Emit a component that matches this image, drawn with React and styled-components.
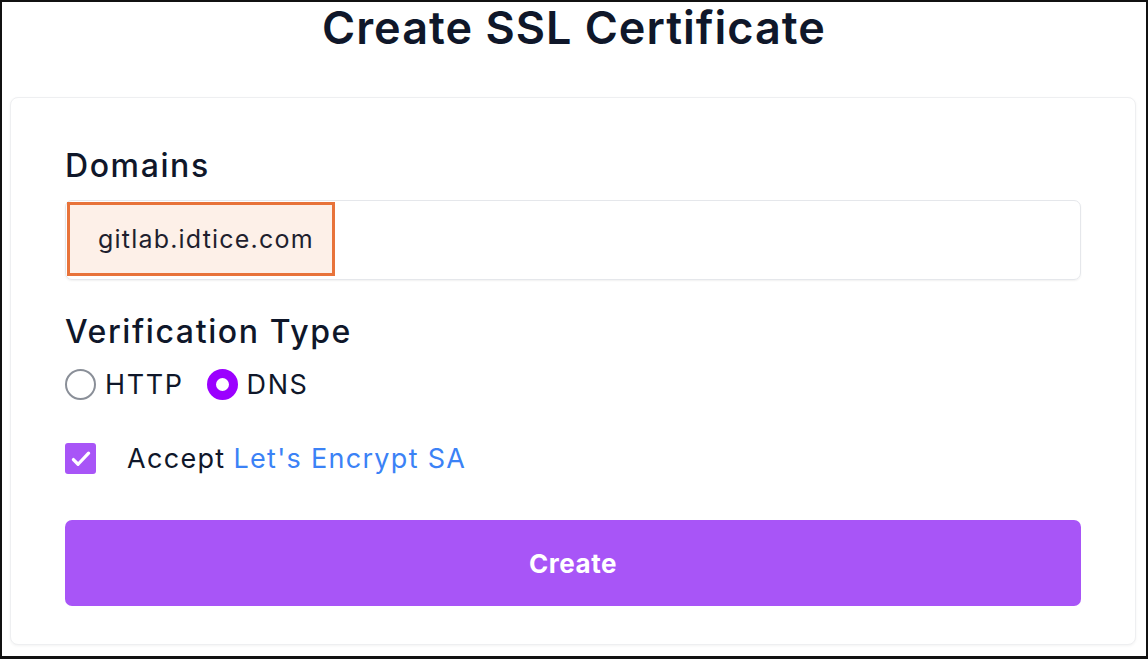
import React from 'react';
import styled, { createGlobalStyle } from 'styled-components';

const GlobalStyle = createGlobalStyle`
	* { box-sizing: border-box; }
	body {
		margin: 0;
		font-family: Inter, "Noto Sans", sans-serif;
		background: #fff;
	}
`;

const Frame = styled.div`
	width: 1148px;
	height: 659px;
	border: 2px solid #111;
	border-bottom-width: 3px;
	background: #fff;
	display: flex;
	flex-direction: column;
	overflow: hidden;
`;

const Title = styled.h1`
	margin: 0;
	height: 95px;
	text-align: center;
	font-size: 45px;
	font-weight: 600;
	letter-spacing: 1px;
	line-height: 52px;
	color: #0f172a;
`;

const Card = styled.div`
	margin: 0 10px 11px 8px;
	flex: 1;
	background: #fff;
	border: 1px solid #eeeff1;
	border-radius: 8px;
	box-shadow: 0 1px 3px rgba(0, 0, 0, 0.05);
	padding: 48px 54px 0;
	display: flex;
	flex-direction: column;
`;

const Label = styled.div`
	font-size: 32px;
	font-weight: 500;
	letter-spacing: 1.6px;
	line-height: 40px;
	color: #0f172a;
`;

const InputBox = styled.div`
	margin-top: 14px;
	height: 80px;
	border: 1px solid #e5e7eb;
	border-radius: 7px;
	box-shadow: 0 1px 2px rgba(0, 0, 0, 0.06);
	padding: 1px;
	display: flex;
	align-items: flex-start;
`;

const Highlight = styled.div`
	width: 268px;
	height: 74px;
	border: 3px solid #e8733a;
	background: #fdf0e8;
	display: flex;
	align-items: center;
	padding-left: 28px;
	font-size: 25px;
	letter-spacing: 1.2px;
	color: #1f1f2e;
`;

const Section = styled.div`
	margin-top: 32px;
`;

const RadioRow = styled.div`
	display: flex;
	align-items: center;
	margin-top: 16px;
`;

const RadioOption = styled.label`
	display: flex;
	align-items: center;
	gap: 9px;
	margin-right: 23px;
	font-size: 27px;
	letter-spacing: 1.6px;
	color: #0f172a;
`;

const RadioDot = styled.span`
	width: 31px;
	height: 31px;
	border-radius: 50%;
	border: ${p => (p.$checked ? '9px solid #9b00ff' : '2px solid #8a8f98')};
	background: #fff;
	display: inline-block;
`;

const CheckRow = styled.div`
	display: flex;
	align-items: center;
	margin-top: 41px;
	font-size: 27px;
	letter-spacing: 1.3px;
	color: #0f172a;
`;

const CheckBox = styled.span`
	width: 31px;
	height: 31px;
	border-radius: 3px;
	background: #a855f7;
	display: flex;
	align-items: center;
	justify-content: center;
	margin-right: 31px;
`;

const Link = styled.a`
	color: #3b82f6;
	text-decoration: none;
	margin-left: 8px;
`;

const Button = styled.button`
	margin-top: 45px;
	height: 86px;
	border: none;
	border-radius: 7px;
	background: #a855f7;
	color: #fff;
	font-family: inherit;
	font-size: 26px;
	font-weight: 700;
	letter-spacing: 0.5px;
`;

export default function App() {
	return (
		<>
			<GlobalStyle />
			<Frame>
				<Title>Create SSL Certificate</Title>
				<Card>
					<Label>Domains</Label>
					<InputBox>
						<Highlight>gitlab.idtice.com</Highlight>
					</InputBox>
					<Section>
						<Label>Verification Type</Label>
						<RadioRow>
							<RadioOption>
								<RadioDot />
								HTTP
							</RadioOption>
							<RadioOption>
								<RadioDot $checked />
								DNS
							</RadioOption>
						</RadioRow>
					</Section>
					<CheckRow>
						<CheckBox>
							<svg width="28" height="28" viewBox="0 0 24 24">
								<path
									d="M5.5 12.5l4 4 9-9.5"
									fill="none"
									stroke="#fff"
									strokeWidth="2.8"
									strokeLinecap="round"
									strokeLinejoin="round"
								/>
							</svg>
						</CheckBox>
						Accept
						<Link href="#">Let's Encrypt SA</Link>
					</CheckRow>
					<Button>Create</Button>
				</Card>
			</Frame>
		</>
	);
}
